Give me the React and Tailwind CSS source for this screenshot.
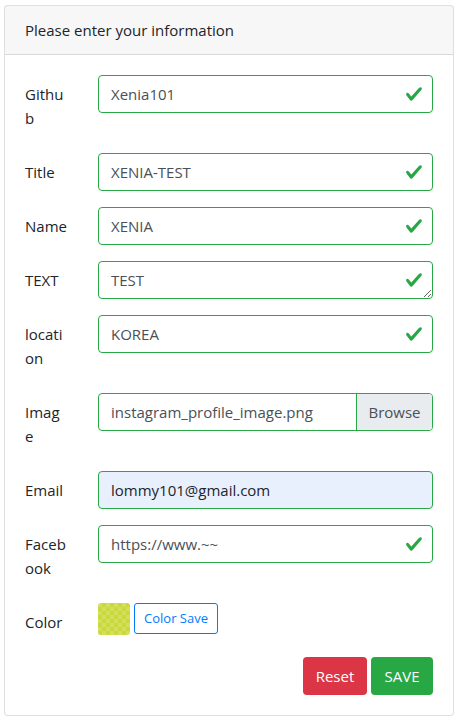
import React from "react";

const Check = () => (
  <svg
    viewBox="0 0 8 8"
    className="absolute right-[10px] top-1/2 -translate-y-1/2 w-[18px] h-[18px] pointer-events-none"
  >
    <path
      fill="#28a745"
      d="M2.3 6.73L.6 4.53c-.4-1.04.46-1.4 1.1-.8l1.1 1.4 3.4-3.8c.6-.63 1.6-.27 1.2.7l-4 4.6c-.43.5-.8.4-1.1.1z"
    />
  </svg>
);

const Label = ({ children }) => (
  <div className="w-[43px] shrink-0 pt-[7px] pb-[7px] leading-6 text-[#212529]">{children}</div>
);

const ValidInput = ({ value }) => (
  <div className="relative flex-1 ml-[30px]">
    <div className="h-[38px] border border-[#28a745] rounded-[4px] bg-white pl-3 pr-9 flex items-center text-[#495057]">
      {value}
    </div>
    <Check />
  </div>
);

export default function App() {
  return (
    <div
      className="pt-[5px] pl-[4px] text-[15px]"
      style={{ fontFamily: '"Open Sans", "Liberation Sans", sans-serif' }}
    >
      <div className="w-[450px] border border-[rgba(0,0,0,0.125)] rounded-[4px] bg-white">
        <div className="px-5 py-3 leading-6 bg-[rgba(0,0,0,0.03)] border-b border-[rgba(0,0,0,0.125)] text-[#212529]">
          Please enter your information
        </div>
        <div className="p-5 flex flex-col gap-4">
          <div className="flex items-start">
            <Label>
              Githu
              <br />b
            </Label>
            <ValidInput value="Xenia101" />
          </div>
          <div className="flex items-start">
            <Label>Title</Label>
            <ValidInput value="XENIA-TEST" />
          </div>
          <div className="flex items-start">
            <Label>Name</Label>
            <ValidInput value="XENIA" />
          </div>
          <div className="flex items-start">
            <Label>TEXT</Label>
            <div className="relative flex-1 ml-[30px] flex">
              <textarea
                readOnly
                value="TEST"
                className="block w-full h-[38px] min-h-[38px] border border-[#28a745] rounded-[4px] bg-white pl-3 pr-9 py-[6px] leading-6 text-[#495057] outline-none resize-y overflow-hidden"
                style={{ fontFamily: "inherit" }}
              />
              <svg
                viewBox="0 0 8 8"
                className="absolute right-[10px] top-[10px] w-[18px] h-[18px] pointer-events-none"
              >
                <path
                  fill="#28a745"
                  d="M2.3 6.73L.6 4.53c-.4-1.04.46-1.4 1.1-.8l1.1 1.4 3.4-3.8c.6-.63 1.6-.27 1.2.7l-4 4.6c-.43.5-.8.4-1.1.1z"
                />
              </svg>
            </div>
          </div>
          <div className="flex items-start">
            <Label>
              locati
              <br />
              on
            </Label>
            <ValidInput value="KOREA" />
          </div>
          <div className="flex items-start">
            <Label>
              Imag
              <br />e
            </Label>
            <div className="flex-1 ml-[30px] h-[38px] border border-[#28a745] rounded-[4px] bg-white flex overflow-hidden text-[#495057]">
              <div className="flex-1 pl-3 flex items-center">instagram_profile_image.png</div>
              <div className="w-[76px] px-3 flex items-center justify-center bg-[#e9ecef] border-l border-[#28a745]">Browse</div>
            </div>
          </div>
          <div className="flex items-start">
            <Label>Email</Label>
            <div className="flex-1 ml-[30px] h-[38px] border border-[#28a745] rounded-[4px] bg-[#e8f0fe] pl-3 flex items-center text-[#212529]">
              lommy101@gmail.com
            </div>
          </div>
          <div className="flex items-start">
            <Label>
              Faceb
              <br />
              ook
            </Label>
            <ValidInput value="https://www.~~" />
          </div>
          <div className="flex items-start">
            <Label>Color</Label>
            <div className="ml-[30px] flex items-start gap-1">
              <div className="w-8 h-8 rounded-[3px] bg-[repeating-conic-gradient(#c9d83c_0_25%,#d3e05a_0_50%)] bg-[length:8px_8px]" />
              <button className="h-[31px] w-[84px] text-[13px] leading-[21px] text-[#007bff] border border-[#007bff] rounded-[3px] bg-white">
                Color Save
              </button>
            </div>
          </div>
          <div className="flex justify-end gap-1">
            <button className="h-[38px] w-[64px] rounded-[4px] bg-[#dc3545] text-white leading-6">Reset</button>
            <button className="h-[38px] w-[62px] rounded-[4px] bg-[#28a745] text-white leading-6">SAVE</button>
          </div>
        </div>
      </div>
    </div>
  );
}
